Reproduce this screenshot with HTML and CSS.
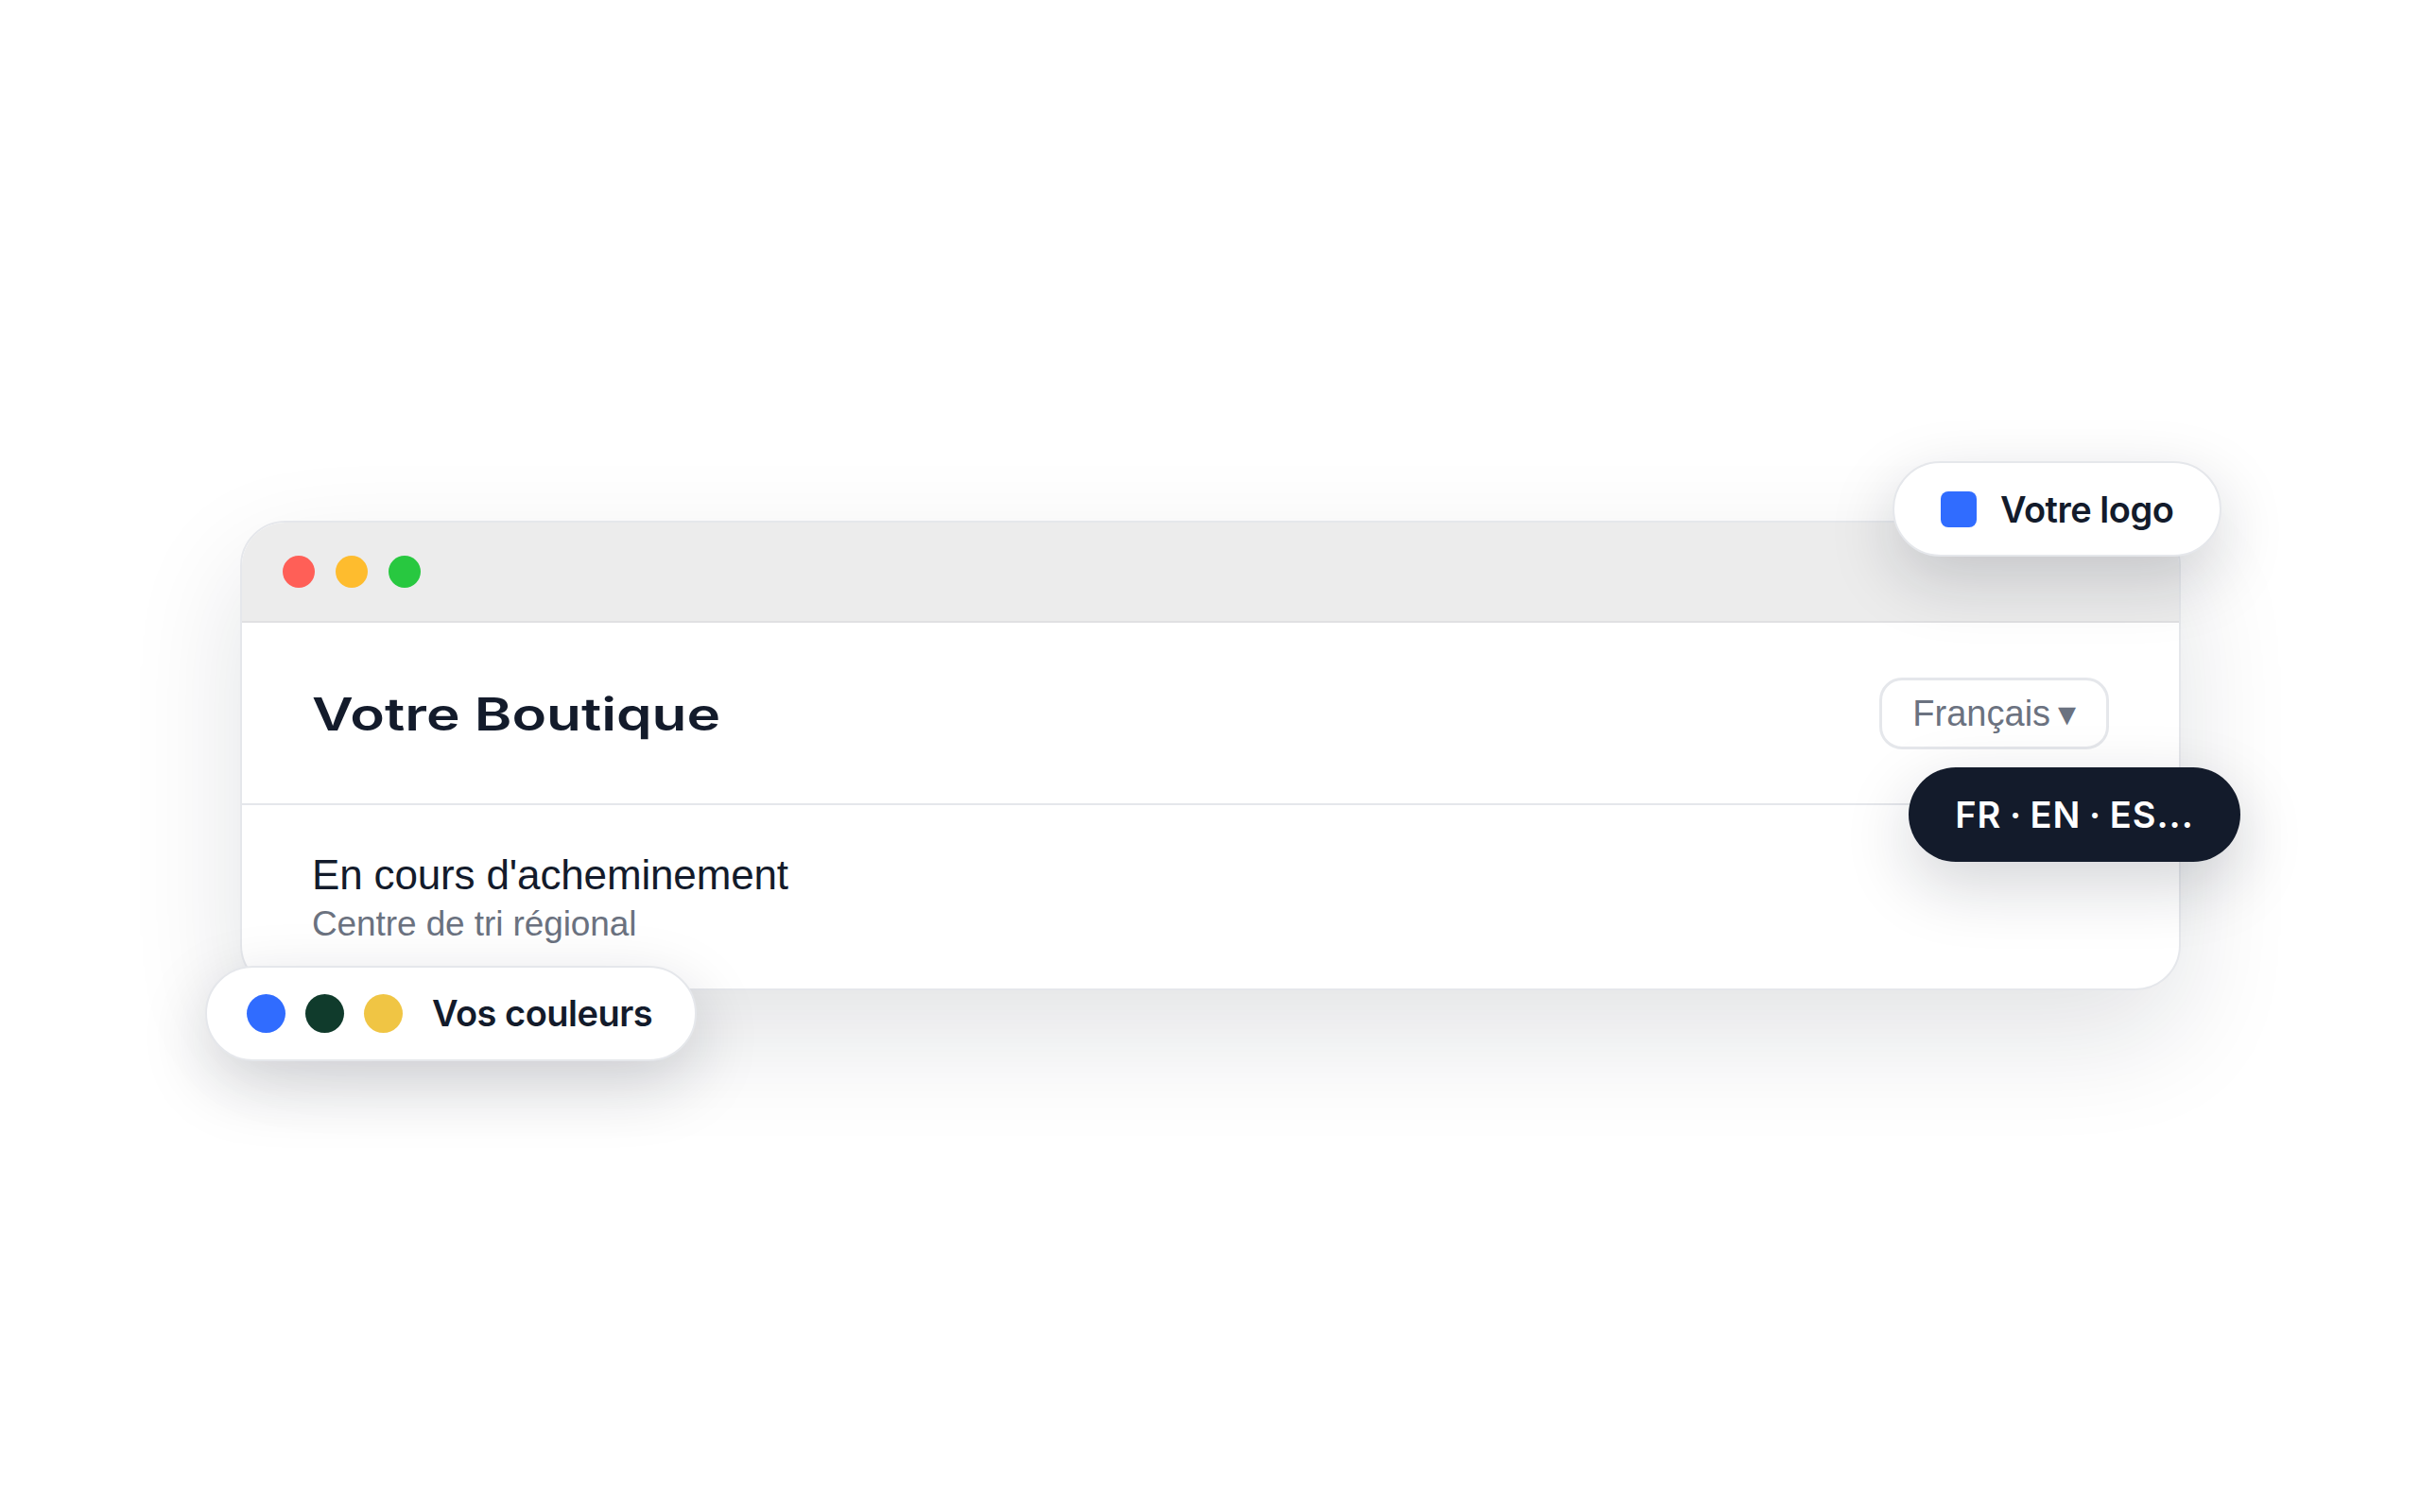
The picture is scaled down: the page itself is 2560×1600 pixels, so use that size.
FILE: index.html
```html
<!DOCTYPE html>
<html lang="fr">
<head>
    <meta charset="UTF-8">
    <meta name="viewport" content="width=device-width, initial-scale=1.0">
    <title>Votre Boutique</title>
    <link rel="stylesheet" href="styles.css">
</head>
<body>

    <div class="window">
        <div class="titlebar">
            <span class="light light-red"></span>
            <span class="light light-yellow"></span>
            <span class="light light-green"></span>
        </div>
        <div class="shop-header">
            <h1 class="shop-name">Votre Boutique</h1>
            <div class="lang-select">Français ▾</div>
        </div>
        <div class="status">
            <div class="status-title">En cours d'acheminement</div>
            <div class="status-place">Centre de tri régional</div>
        </div>

        <!-- Floating pills -->
        <div class="pill pill-logo">
            <span class="logo-square"></span>
            <span>Votre logo</span>
        </div>
        <div class="pill pill-langs">FR · EN · ES...</div>
        <div class="pill pill-colors">
            <span class="swatch swatch-blue"></span>
            <span class="swatch swatch-green"></span>
            <span class="swatch swatch-yellow"></span>
            <span class="colors-label">Vos couleurs</span>
        </div>
    </div>

</body>
</html>
```

FILE: styles.css
```css
* {
    box-sizing: border-box;
}
body {
    margin: 0;
    height: 1599px;
    display: flex;
    align-items: center;
    justify-content: center;
    background: #fff;
    font-family: Inter, "Liberation Sans", sans-serif;
    color: #131b2b;
    overflow: hidden;
}
.window {
    position: relative;
    width: 2053px;
    height: 497px;
    margin-left: 1px;
    background: #fff;
    border: 2px solid #e5e7eb;
    border-radius: 48px;
    box-shadow: 0 48px 120px rgba(17, 24, 39, 0.12);
}
.titlebar {
    height: 106px;
    display: flex;
    align-items: center;
    gap: 22px;
    padding-left: 43px;
    background: #ececec;
    border-bottom: 2px solid #e0e0e2;
    border-radius: 46px 46px 0 0;
}
.light {
    width: 34px;
    height: 34px;
    border-radius: 50%;
}
.light-red {
    background: #ff5f57;
}
.light-yellow {
    background: #febc2e;
}
.light-green {
    background: #28c840;
}
.shop-header {
    height: 193px;
    display: flex;
    align-items: center;
    justify-content: space-between;
    padding: 0 74px;
    border-bottom: 2px solid #e5e7eb;
}
.shop-name {
    margin: 2px 0 0;
    font-size: 48px;
    font-weight: 600;
    transform: scaleX(1.255);
    transform-origin: left center;
}
.lang-select {
    width: 243px;
    height: 76px;
    display: flex;
    align-items: center;
    justify-content: center;
    border: 3px solid #e5e7eb;
    border-radius: 24px;
    color: #6b7280;
    font-family: "Liberation Sans", sans-serif;
    font-size: 38px;
    word-spacing: -3px;
}
.status {
    padding: 48px 74px 0;
    font-family: "Liberation Sans", sans-serif;
}
.status-title {
    font-size: 44px;
    line-height: 52px;
    letter-spacing: -0.15px;
}
.status-place {
    margin-top: 4px;
    color: #6b7280;
    font-size: 37px;
    line-height: 44px;
    letter-spacing: -0.1px;
}
.pill {
    position: absolute;
    height: 101px;
    display: flex;
    align-items: center;
    background: #fff;
    border: 2px solid #e5e7eb;
    border-radius: 51px;
    font-size: 38px;
    font-weight: 600;
    letter-spacing: -0.5px;
    box-shadow: 0 24px 70px rgba(17, 24, 39, 0.18);
}
.pill-logo {
    top: -65px;
    right: -45px;
    width: 348px;
    gap: 25px;
    padding-left: 49px;
}
.logo-square {
    width: 38px;
    height: 38px;
    border-radius: 8px;
    background: #306cff;
}
.pill-langs {
    top: 259px;
    right: -65px;
    width: 351px;
    height: 100px;
    justify-content: center;
    background: #131b2b;
    border: 0;
    color: #fff;
    letter-spacing: 1px;
    word-spacing: -2px;
}
.pill-colors {
    top: 469px;
    left: -39px;
    width: 520px;
    gap: 21px;
    padding-left: 42px;
}
.swatch {
    width: 41px;
    height: 41px;
    border-radius: 50%;
}
.swatch-blue {
    background: #306cff;
}
.swatch-green {
    background: #103b2c;
}
.swatch-yellow {
    background: #f0c544;
}
.colors-label {
    margin: -2px 0 0 10px;
}
```
